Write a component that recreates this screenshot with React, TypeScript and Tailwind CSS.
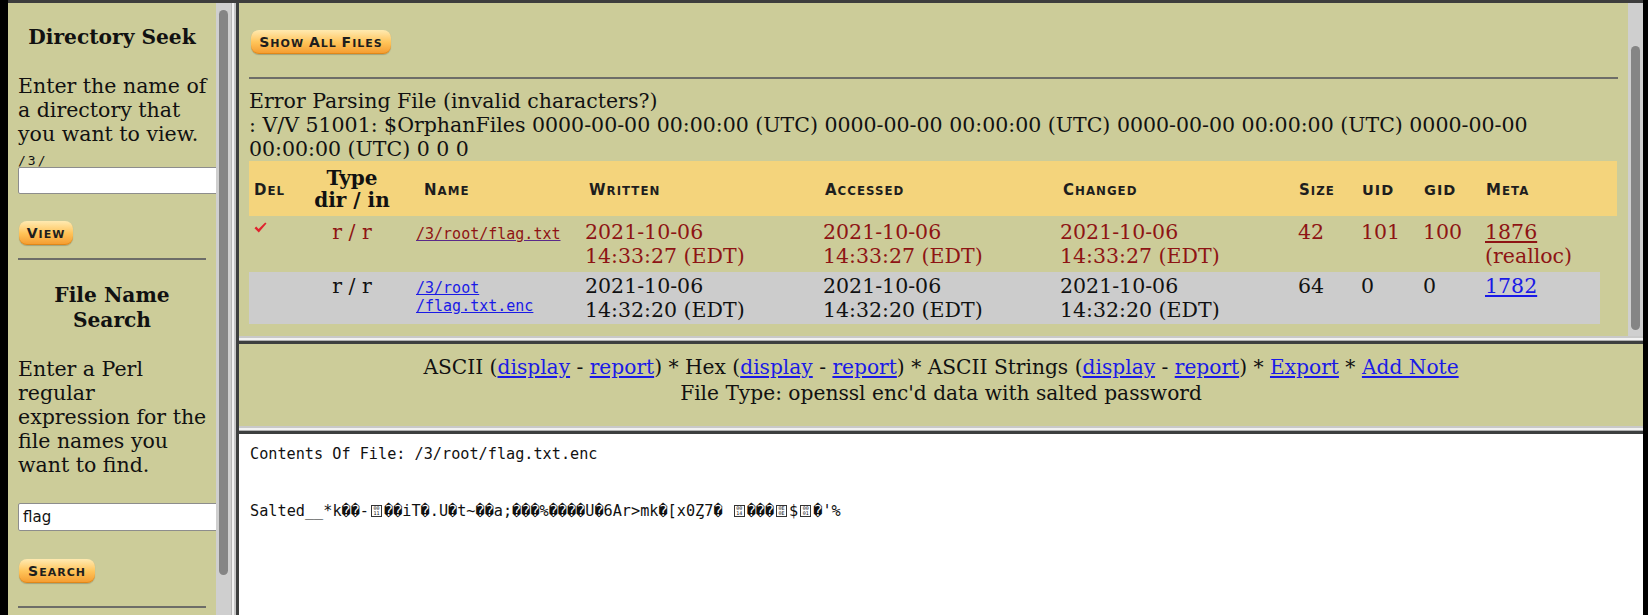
import React from 'react';

// small-caps labels, like the image buttons and column headers of the old page
function Caps({ text, full = false, big = false }: { text: string; full?: boolean; big?: boolean }) {
  const words = text.split(' ');
  const lg = big ? 'text-[15px]' : 'text-[14px]';
  const sm = big ? 'text-[11.8px]' : 'text-[11px]';
  return (
    <span className="whitespace-nowrap font-['DejaVu_Sans',sans-serif] font-bold tracking-[1px] text-[#1e1e1e]">
      {words.map((w, i) => (
        <React.Fragment key={i}>
          {i > 0 && <span className={sm}> </span>}
          {full ? (
            <span className="text-[14.5px]">{w}</span>
          ) : (
            <>
              <span className={lg}>{w[0]}</span>
              <span className={sm}>{w.slice(1)}</span>
            </>
          )}
        </React.Fragment>
      ))}
    </span>
  );
}

function OrangeButton({ label, className }: { label: string; className: string }) {
  return (
    <div
      className={`flex h-[24px] shrink-0 items-center justify-center rounded-[8px] bg-linear-to-b from-[#ffeab0] via-[#ffc55a] to-[#f49a2c] shadow-[inset_0_-1px_0_rgba(200,110,0,0.45),0_1px_1px_rgba(0,0,0,0.2)] ${className}`}
    >
      <Caps text={label} />
    </div>
  );
}

function HBorder() {
  return (
    <div className="flex h-[8px] shrink-0 flex-col">
      <div className="h-[2px] bg-[#c9c9c9]" />
      <div className="h-[2px] bg-[#f2f2f2]" />
      <div className="h-[1px] bg-[#b0b0b0]" />
      <div className="h-[3px] bg-[#3d3f3f]" />
    </div>
  );
}

function VBorder() {
  return (
    <div className="flex w-[8px] shrink-0">
      <div className="w-[1px] bg-[#b8b8b8]" />
      <div className="w-[2px] bg-[#f2f2f2]" />
      <div className="w-[2px] bg-[#c6c6c6]" />
      <div className="w-[3px] bg-[#3d3f3f]" />
    </div>
  );
}

function Scrollbar({ top, height }: { top: string; height: string }) {
  return (
    <div className="relative w-[15px] shrink-0 bg-[#cfcfcf]">
      <div className={`absolute left-[3px] w-[9px] rounded-full bg-[#858585] ${top} ${height}`} />
    </div>
  );
}

function LeftFrame() {
  return (
    <div className="flex w-[208px] shrink-0 flex-col overflow-hidden bg-[#cccc99] px-[10px] text-[#111]">
      <h3 className="mt-[22px] text-center text-[20.2px] font-bold leading-[25px]">Directory Seek</h3>
      <p className="mt-[25px] whitespace-nowrap text-[20.5px] leading-[23.8px]">
        Enter the name of
        <br />a directory that
        <br />you want to view.
      </p>
      <div className="mt-[8px] font-['DejaVu_Sans_Mono',monospace] text-[13px] leading-[13px] tracking-[2px]">/3/</div>
      <div className="h-[27px] w-[230px] shrink-0 rounded-[2px] border border-[#8d8d8d] bg-white" />
      <OrangeButton label="VIEW" className="mt-[27px] ml-[1px] w-[54px]" />
      <div className="mt-[13px] h-[2px] shrink-0 bg-[#6d6d68]" />
      <h3 className="mt-[23px] text-center text-[20.2px] font-bold leading-[25px]">
        File Name
        <br />
        Search
      </h3>
      <p className="mt-[25px] whitespace-nowrap text-[20.5px] leading-[23.8px]">
        Enter a Perl
        <br />
        regular
        <br />
        expression for the
        <br />
        file names you
        <br />
        want to find.
      </p>
      <div className="mt-[26px] flex h-[28px] w-[230px] shrink-0 items-center rounded-[2px] border border-[#8d8d8d] bg-white pl-[4px] font-['DejaVu_Sans',sans-serif] text-[15px]">
        flag
      </div>
      <OrangeButton label="SEARCH" className="mt-[28px] ml-[1px] w-[76px]" />
      <div className="mt-[23px] h-[2px] shrink-0 bg-[#6d6d68]" />
    </div>
  );
}

const cols = 'grid grid-cols-[50px_106px_176px_238px_237px_238px_63px_62px_62px_1fr]';
const red = 'text-[#8e1414]';

function Check() {
  return (
    <svg width="13" height="11" viewBox="0 0 13 11" className="mt-[1px] ml-[5px]">
      <path d="M0.5 6.2 L2.2 4.6 L4.6 7 L11.2 0.5 L12.5 1.6 L4.8 10.5 Z" fill="#e0232e" />
    </svg>
  );
}

function FileTable() {
  return (
    <div className="flex flex-col text-[20.5px] leading-[23.8px]">
      <div className={`${cols} h-[55px] w-[1368px] items-center bg-[#f4d47c]`}>
        <div className="mt-[3px] pl-[5px]"><Caps text="DEL" big /></div>
        <div className="text-center text-[20px] font-bold leading-[22px] text-[#111]">
          Type
          <br />
          dir / in
        </div>
        <div className="mt-[3px] pl-[19px]"><Caps text="NAME" big /></div>
        <div className="mt-[3px] pl-[8px]"><Caps text="WRITTEN" big /></div>
        <div className="mt-[3px] pl-[6px]"><Caps text="ACCESSED" big /></div>
        <div className="mt-[3px] pl-[7px]"><Caps text="CHANGED" big /></div>
        <div className="mt-[3px] pl-[5px]"><Caps text="SIZE" big /></div>
        <div className="mt-[3px] pl-[5px]"><Caps text="UID" full /></div>
        <div className="mt-[3px] pl-[5px]"><Caps text="GID" full /></div>
        <div className="mt-[3px] pl-[5px]"><Caps text="META" big /></div>
      </div>

      <div className={`${cols} h-[56px] w-[1368px] items-baseline pt-[5px] ${red}`}>
        <div className="self-start"><Check /></div>
        <div className="text-center">r / r</div>
        <div className="pl-[11px] font-['DejaVu_Sans_Mono',monospace] text-[15px] leading-[17.5px]">
          <span className="underline decoration-[#5a2a8a]">/3/root/flag.txt</span>
        </div>
        <div className="pl-[4px]">2021-10-06<br />14:33:27 (EDT)</div>
        <div className="pl-[4px]">2021-10-06<br />14:33:27 (EDT)</div>
        <div className="pl-[4px]">2021-10-06<br />14:33:27 (EDT)</div>
        <div className="pl-[4px]">42</div>
        <div className="pl-[4px]">101</div>
        <div className="pl-[4px]">100</div>
        <div className="pl-[4px]">
          <span className="underline">1876</span>
          <br />
          (realloc)
        </div>
      </div>

      <div className={`${cols} h-[52px] w-[1351px] items-baseline bg-[#cccccc] pt-[3px] text-[#111]`}>
        <div />
        <div className="text-center">r / r</div>
        <div className="pl-[11px] font-['DejaVu_Sans_Mono',monospace] text-[15px] leading-[17.5px] text-[#1a1ae6]">
          <span className="underline">/3/root</span>
          <br />
          <span className="underline">/flag.txt.enc</span>
        </div>
        <div className="pl-[4px]">2021-10-06<br />14:32:20 (EDT)</div>
        <div className="pl-[4px]">2021-10-06<br />14:32:20 (EDT)</div>
        <div className="pl-[4px]">2021-10-06<br />14:32:20 (EDT)</div>
        <div className="pl-[4px]">64</div>
        <div className="pl-[4px]">0</div>
        <div className="pl-[4px]">0</div>
        <div className="pl-[4px]">
          <span className="text-[#1a1ae6] underline">1782</span>
        </div>
      </div>
    </div>
  );
}

function TopFrame() {
  return (
    <div className="flex h-[333px] shrink-0">
      <div className="flex w-[1389px] flex-col overflow-hidden bg-[#cccc99] px-[10px] text-[#111]">
        <OrangeButton label="SHOW ALL FILES" className="mt-[27px] ml-[2px] w-[140px]" />
        <div className="mt-[23px] h-[2px] shrink-0 bg-[#6d6d68]" />
        <div className="mt-[11px] whitespace-nowrap text-[20.5px] leading-[23.8px]">
          Error Parsing File (invalid characters?)
          <br />
          : V/V 51001: $OrphanFiles 0000-00-00 00:00:00 (UTC) 0000-00-00 00:00:00 (UTC) 0000-00-00 00:00:00 (UTC) 0000-00-00
          <br />
          00:00:00 (UTC) 0 0 0
        </div>
        <FileTable />
      </div>
      <Scrollbar top="top-[43px]" height="h-[284px]" />
    </div>
  );
}

function MiddleFrame() {
  const link = 'text-[#1a1ae6] underline';
  return (
    <div className="h-[82px] shrink-0 bg-[#cccc99] pt-[12px] text-center text-[20.2px] leading-[23.8px] text-[#111]">
      <div>
        ASCII (<span className={link}>display</span> - <span className={link}>report</span>) * Hex (
        <span className={link}>display</span> - <span className={link}>report</span>) * ASCII Strings (
        <span className={link}>display</span> - <span className={link}>report</span>) *{' '}
        <span className={link}>Export</span> * <span className={link}>Add Note</span>
      </div>
      <div className="mt-[2px]">File Type: openssl enc'd data with salted password</div>
    </div>
  );
}

const hexBoxes: Record<string, [string, string]> = {
  '①': ['00', '11'],
  '②': ['00', '14'],
  '③': ['0E', '0E'],
  '④': ['00', '01'],
};

// the bytes as the browser showed them: replacement diamonds and hex boxes
const garbled = "Salted__*k��-①��iT�.U�t~��a;���%����U�6Ar>mk�[x0Ȥ7� ②���③$④�'%";

function Garbled() {
  return (
    <div className="mt-[39px] whitespace-pre">
      {Array.from(garbled).map((ch, i) => {
        const box = hexBoxes[ch];
        if (box) {
          return (
            <span key={i} className="inline-flex w-[15px] justify-center align-middle">
              <span className="flex h-[12px] w-[11px] flex-col items-center justify-center border border-[#333] text-[5px] leading-[5px]">
                <span>{box[0]}</span>
                <span>{box[1]}</span>
              </span>
            </span>
          );
        }
        if (ch === '�' || ch === 'Ȥ') {
          return (
            <span key={i} className="inline-block w-[1ch] text-center">
              {ch}
            </span>
          );
        }
        return <React.Fragment key={i}>{ch}</React.Fragment>;
      })}
    </div>
  );
}

function BottomFrame() {
  return (
    <div className="min-h-0 flex-1 bg-white px-[11px] pt-[12px] font-['DejaVu_Sans_Mono',monospace] text-[15.2px] leading-[17.5px] text-[#111]">
      <div>Contents Of File: /3/root/flag.txt.enc</div>
      <Garbled />
    </div>
  );
}

export default function App() {
  return (
    <div className="flex h-[615px] w-[1648px] overflow-hidden bg-black font-['DejaVu_Serif',serif]">
      <div className="w-[8px] shrink-0" />
      <div className="flex w-[1635px] shrink-0 flex-col">
        <div className="h-[3px] shrink-0 bg-[#3d3d3d]" />
        <div className="flex min-h-0 flex-1">
          <LeftFrame />
          <Scrollbar top="top-[7px]" height="h-[565px]" />
          <VBorder />
          <div className="flex w-[1404px] shrink-0 flex-col">
            <TopFrame />
            <HBorder />
            <MiddleFrame />
            <HBorder />
            <BottomFrame />
          </div>
        </div>
      </div>
    </div>
  );
}
